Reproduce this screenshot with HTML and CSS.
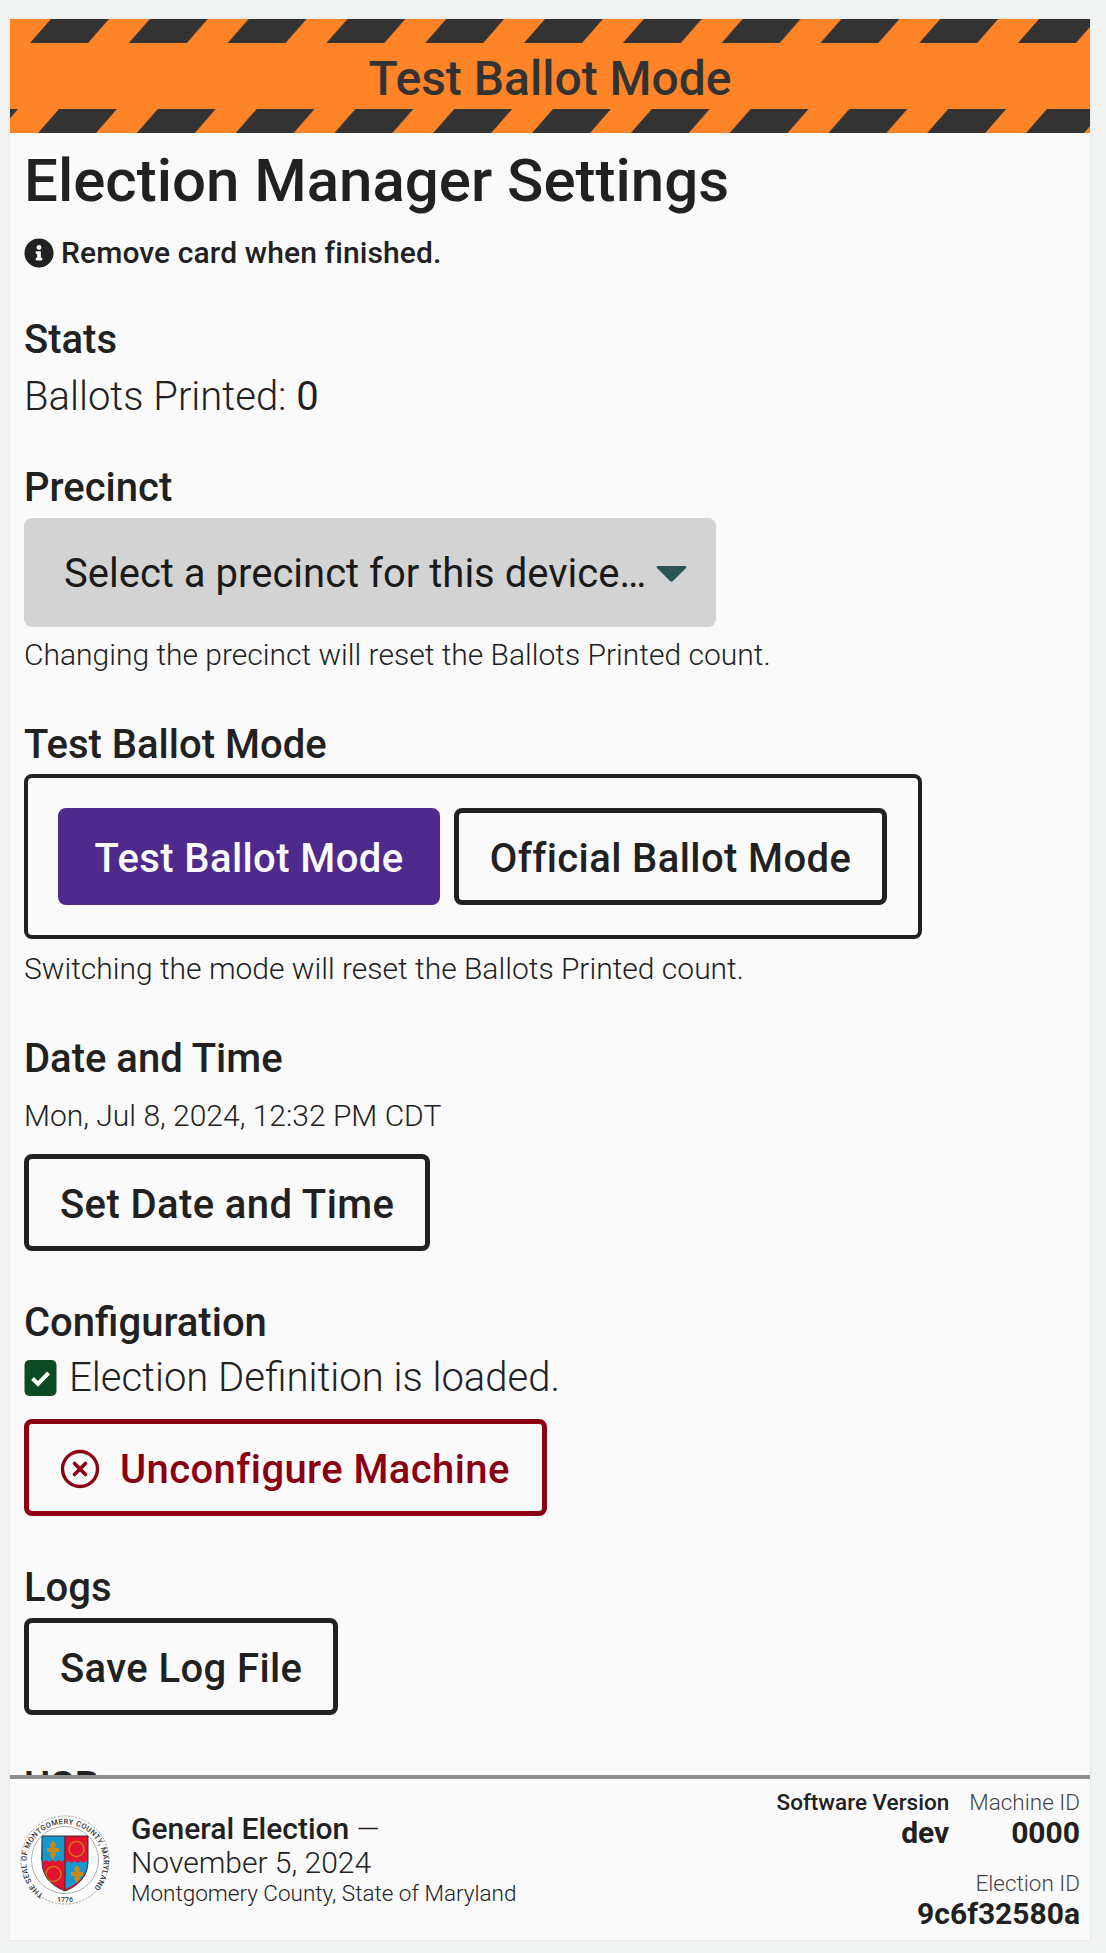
FILE: index.html
```html
<!DOCTYPE html>
<html lang="en">
<head>
<meta charset="utf-8">
<title>Election Manager Settings</title>
<link rel="stylesheet" href="styles.css">
</head>
<body>
<div class="screen">
  <header class="banner">
    <svg class="stripes" width="100%" height="24" aria-hidden="true">
      <defs><pattern id="st" patternUnits="userSpaceOnUse" width="98.8" height="24" x="20"><polygon points="0,24 21,0 79,0 58,24" fill="#333"/></pattern></defs>
      <rect width="100%" height="24" fill="url(#st)"/>
    </svg>
    <div class="banner-title">Test Ballot Mode</div>
    <svg class="stripes" width="100%" height="24" aria-hidden="true">
      <defs><pattern id="sb" patternUnits="userSpaceOnUse" width="98.8" height="24" x="28"><polygon points="0,24 21,0 79,0 58,24" fill="#333"/></pattern></defs>
      <rect width="100%" height="24" fill="url(#sb)"/>
    </svg>
  </header>
  <main class="main">
    <h1 class="title">Election Manager Settings</h1>
    <p class="notice">
      <svg class="notice-icon" viewBox="0 0 512 512" aria-hidden="true"><path d="M256 8a248 248 0 1 0 0 496 248 248 0 0 0 0-496zm0 110a42 42 0 1 1 0 84 42 42 0 0 1 0-84zm56 254c0 7-5 12-12 12h-88c-7 0-12-5-12-12v-24c0-7 5-12 12-12h12v-64h-12c-7 0-12-5-12-12v-24c0-7 5-12 12-12h64c7 0 12 5 12 12v100h12c7 0 12 5 12 12z" fill="#212121"/></svg>
      <span>Remove card when finished.</span>
    </p>

    <section class="sec sec-stats">
      <h2 class="sec-h">Stats</h2>
      <p class="stat">Ballots Printed: <span class="stat-num">0</span></p>
    </section>

    <section class="sec sec-precinct">
      <h2 class="sec-h">Precinct</h2>
      <div class="select"><span>Select a precinct for this device…</span><svg class="caret" viewBox="0 0 31 18" aria-hidden="true"><path d="M2 1h27c1 0 2 1 1 2L17 16c-1 1-2 1-3 0L1 3C0 2 1 1 2 1z" fill="#2b5554"/></svg></div>
      <p class="cap cap-select">Changing the precinct will reset the Ballots Printed count.</p>
    </section>

    <section class="sec">
      <h2 class="sec-h">Test Ballot Mode</h2>
      <div class="segment">
        <div class="btn btn-primary">Test Ballot Mode</div>
        <div class="btn btn-seg">Official Ballot Mode</div>
      </div>
      <p class="cap cap-segment">Switching the mode will reset the Ballots Printed count.</p>
    </section>

    <section class="sec">
      <h2 class="sec-h">Date and Time</h2>
      <p class="cap cap-date">Mon, Jul 8, 2024, 12:32 PM CDT</p>
      <div class="btn">Set Date and Time</div>
    </section>

    <section class="sec">
      <h2 class="sec-h">Configuration</h2>
      <p class="status">
        <svg class="check" viewBox="0 0 32 36" aria-hidden="true"><rect width="32" height="36" rx="5" fill="#0b4a22"/><path d="M8 18.5l5.5 5.5L24 13" fill="none" stroke="#fff" stroke-width="4"/></svg>
        <span>Election Definition is loaded.</span>
      </p>
      <div class="btn btn-danger">
        <svg class="x-icon" viewBox="0 0 40 40" aria-hidden="true"><circle cx="20" cy="20" r="17.5" fill="none" stroke="#8a0012" stroke-width="3.4"/><path d="M14.5 14.5l11 11M25.5 14.5l-11 11" stroke="#8a0012" stroke-width="3.6" stroke-linecap="round"/></svg>
        <span>Unconfigure Machine</span>
      </div>
    </section>

    <section class="sec">
      <h2 class="sec-h">Logs</h2>
      <div class="btn">Save Log File</div>
    </section>

    <section class="sec">
      <h2 class="sec-h">USB</h2>
    </section>
  </main>
  <footer class="footer">
    <div class="election">
      <svg class="seal" viewBox="0 0 90 90" role="img" aria-label="Seal of Montgomery County, Maryland">
        <defs><path id="arc" d="M23.500 79.500A38.500 38.500 0 1 1 66.500 79.500"/></defs>
        <circle cx="45" cy="45" r="44" fill="#fff" stroke="#9a9a9a" stroke-width="1" stroke-dasharray="2 1.500"/>
        <circle cx="45" cy="45" r="33.500" fill="#fff" stroke="#888" stroke-width=".7"/>
        <text class="seal-text"><textPath href="#arc" textLength="186">THE SEAL OF MONTGOMERY COUNTY, MARYLAND</textPath></text>
        <text class="seal-year" x="45" y="87" text-anchor="middle">1776</text>
        <path d="M22 21h23v55c-10-4-23-12-23-30z" fill="#e3132f"/>
        <path d="M45 21h23v25c0 18-13 26-23 30z" fill="#e3132f"/>
        <path d="M22 21h22.500v24l-3 2-3-2-3 2-3-2-3 2-3-2-3 2-2.500-2z" fill="#1597d0"/>
        <path d="M45.500 48l3-2 3 2 3-2 3 2 3-2 3 2 3-2 1.500 1c-1 16-13 23-23 27z" fill="#1597d0"/>
        <g fill="#c98a1c"><path d="M33 25l3 5-1 3 4 0v4l-4 0 1 3-3 5-3-5 1-3-4 0v-4l4 0-1-3z"/><path d="M57 50l3 4-1 3 4 0v4l-4 0 1 3-3 4-3-4 1-3-4 0v-4l4 0-1-3z"/></g>
        <g fill="none" stroke="#c9791c" stroke-width="1.500"><circle cx="56.500" cy="34" r="7.500"/><circle cx="33.500" cy="59" r="7.500"/></g>
        <path d="M22 21h46v25c0 18-13 26-23 30-10-4-23-12-23-30zM45 21v55" fill="none" stroke="#333" stroke-width="1"/>
      </svg>
      <div class="election-text">
        <div class="el-line"><b class="el-name">General Election</b> —</div>
        <div class="el-line">November 5, 2024</div>
        <div class="el-county">Montgomery County, State of Maryland</div>
      </div>
    </div>
    <div class="meta">
      <div class="meta-row">
        <div class="meta-item"><div class="meta-label meta-bold">Software Version</div><div class="meta-val">dev</div></div>
        <div class="meta-item"><div class="meta-label">Machine ID</div><div class="meta-val">0000</div></div>
      </div>
      <div class="meta-item meta-eid"><div class="meta-label">Election ID</div><div class="meta-val">9c6f32580a</div></div>
    </div>
  </footer>
</div>
</body>
</html>
```

FILE: styles.css
```css
* { box-sizing: border-box; }
html, body { margin: 0; height: 100%; }
body {
  background: #f1f3f3;
  padding: 19px 16px 13px 10px;
  font-family: Roboto, "Liberation Sans", sans-serif;
  color: #212121;
  font-weight: 300;
}
p, h1, h2 { margin: 0; }
.screen {
  height: 100%;
  display: flex;
  flex-direction: column;
  background: #fafafa;
  box-shadow: 0 0 2px #d5d8d8;
  overflow: hidden;
}
.banner { background: #ff8428; height: 114px; display: flex; flex-direction: column; flex: none; }
.stripes { display: block; flex: none; }
.banner-title {
  height: 66px;
  text-align: center;
  font-size: 48px;
  line-height: 71px;
  font-weight: 500;
  color: #333;
}
.main { flex: 1; min-height: 0; overflow: hidden; padding: 16px 14px 0; }
.title { font-size: 60px; line-height: 64px; font-weight: 500; }
.notice { display: flex; align-items: center; gap: 7px; margin-top: 22px; font-size: 30px; line-height: 36px; font-weight: 500; letter-spacing: .1px; }
.notice-icon { width: 30px; height: 30px; flex: none; }
.sec { margin-top: 48px; }
.sec-stats { margin-top: 45px; }
.sec-precinct { margin-top: 43px; }
.sec-h { font-size: 40px; line-height: 48px; font-weight: 500; }
.stat { font-size: 40px; line-height: 48px; margin-top: 9px; }
.stat-num { font-weight: 400; }
.select {
  display: flex; align-items: center; justify-content: space-between;
  width: 692px; height: 109px; margin-top: 6px; padding: 2px 29px 0 40px;
  background: #d3d3d3; border-radius: 8px;
  font-size: 40px; font-weight: 400; color: #1a1a1a;
}
.caret { width: 31px; height: 18px; }
.cap { font-size: 30px; line-height: 36px; }
.cap-select { margin-top: 10px; }
.cap-segment { margin-top: 12px; }
.cap-date { margin-top: 15px; }
.segment {
  display: flex; gap: 14px; width: 898px; height: 165px; margin-top: 5px; padding: 30px;
  border: 4px solid #212121; border-radius: 8px;
}
.btn {
  display: inline-flex; align-items: center; justify-content: center;
  height: 97px; padding: 3px 31px 0;
  border: 5px solid #212121; border-radius: 8px;
  background: #fafafa; font-size: 40px; font-weight: 500; letter-spacing: .4px;
  color: #212121;
}
.cap-date + .btn { margin-top: 20px; }
.sec > .sec-h + .btn { margin-top: 6px; display: flex; width: max-content; }
.btn-primary { background: #4e2a8c; border-color: #4e2a8c; color: #fafafa; width: 382px; padding: 3px 0 0; }
.btn-seg { width: 433px; padding: 3px 0 0; }
.status { display: flex; align-items: center; gap: 12px; font-size: 40px; line-height: 50px; margin-top: 6px; }
.check { width: 33px; height: 36px; flex: none; }
.btn-danger { color: #8a0012; border-color: #8a0012; gap: 20px; margin-top: 16px; display: flex; width: max-content; padding-left: 31px; padding-right: 32px; }
.x-icon { width: 40px; height: 40px; flex: none; }
.footer {
  flex: none; height: 165px;
  display: flex; justify-content: space-between;
  border-top: 4px solid #8f8f8f;
  padding: 0 10px 0 10px;
  background: #fafafa;
}
.election { display: flex; align-items: center; gap: 21px; }
.seal { width: 90px; height: 90px; flex: none; }
.seal-text { font-size: 7.500px; font-weight: 500; fill: #333; }
.seal-year { font-size: 7px; font-weight: 500; fill: #333; }
.election-text { color: #212121; }
.el-line { font-size: 30px; line-height: 34px; }
.el-name { font-weight: 500; }
.el-county { font-size: 22.500px; line-height: 27px; }
.meta { display: flex; flex-direction: column; align-items: flex-end; padding-top: 10px; }
.meta-row { display: flex; gap: 20px; }
.meta-item { text-align: right; }
.meta-label { font-size: 22.500px; line-height: 26px; color: #444; }
.meta-bold { font-weight: 500; color: #212121; }
.meta-val { font-size: 30px; line-height: 36px; font-weight: 700; }
.meta-eid { margin-top: 19px; }
```
